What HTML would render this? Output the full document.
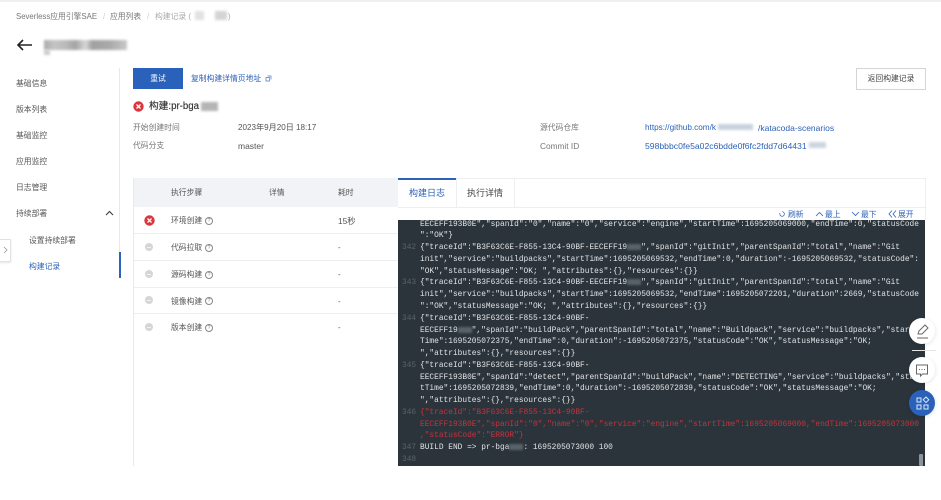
<!DOCTYPE html>
<html lang="zh"><head><meta charset="utf-8"><style>
html,body{margin:0;padding:0}
body{width:941px;height:500px;overflow:hidden;background:#fff;position:relative;font:7.8px "Liberation Sans","Noto Sans CJK SC",sans-serif;color:#555}
#w{position:absolute;left:0;top:0;width:941px;height:500px;overflow:hidden;filter:blur(.3px)}
.a{position:absolute;white-space:nowrap;line-height:12px;margin-top:.8px}
.b{position:absolute}
.blue{color:#2c62b8}
.blur{position:absolute;filter:blur(1.2px)}
.log{position:absolute;left:398px;top:220px;width:527px;height:246px;background:#2b343b;overflow:hidden}
.log pre{position:absolute;left:22px;top:-1.4px;margin:0;font:7.85px/11.77px "Liberation Mono",monospace;color:#e0e3e5;white-space:pre}
.log .n{position:absolute;left:4px;top:-1.4px;font:7.85px/11.77px "Liberation Mono",monospace;color:#59626a;white-space:pre}
.r{color:#c2333d}
.g{display:inline-block;width:14px;height:6px;background:#59626a;filter:blur(1px);vertical-align:-1px}
.fl{position:absolute;left:909px;width:26px;height:26px;border-radius:50%;background:#fff;box-shadow:0 1px 4px rgba(0,0,0,.12)}
.row{position:absolute;left:134px;width:264px;height:1px;background:#eceef0}
.d{position:absolute;left:145px;width:8px;height:8px;border-radius:50%;background:#d4d6d8}
.d:after{content:"";position:absolute;left:2px;top:3.5px;width:4px;height:1px;background:#f2f2f2}
.q{position:absolute;left:205px;width:6px;height:6px;border:.7px solid #888;border-radius:50%;font-size:5px;line-height:6px;text-align:center;color:#777}
</style></head><body><div id="w">
<div class="b" style="left:0;top:0;width:941px;height:2px;background:#f0f0f0"></div>

<div class="a" style="left:16px;top:10px;color:#777">Severless应用引擎SAE</div>
<div class="a" style="left:103px;top:10px;color:#ccc">/</div>
<div class="a" style="left:110px;top:10px;color:#777">应用列表</div>
<div class="a" style="left:147px;top:10px;color:#ccc">/</div>
<div class="a" style="left:155px;top:10px;color:#aaa">构建记录 (</div>
<div class="blur" style="left:195px;top:11px;width:9px;height:9px;background:#e2e2e2"></div>
<div class="blur" style="left:215px;top:11px;width:12px;height:9px;background:#d4d4d4"></div>
<div class="a" style="left:228px;top:10px;color:#aaa">)</div>

<svg class="b" style="left:16px;top:38px" width="17" height="14" viewBox="0 0 17 14"><path d="M16 7H2M7 2L2 7l5 5" fill="none" stroke="#222" stroke-width="1.6"/></svg>
<div class="blur" style="left:44px;top:40px;width:83px;height:10px;background:linear-gradient(90deg,#aaa,#c4c4c4 12%,#bbb 25%,#a4a4a4 38%,#d8d8d8 50%,#a0a0a0 58%,#aaa 80%,#c8c8c8)"></div>
<div class="blur" style="left:44px;top:50px;width:6px;height:5px;background:#ccc"></div>

<div class="b" style="left:119px;top:68px;width:1px;height:210px;background:#e6e8ea"></div>
<div class="b" style="left:119px;top:252px;width:1.5px;height:26px;background:#2c62b8"></div>
<div class="a" style="left:16px;top:77px">基础信息</div>
<div class="a" style="left:16px;top:103px">版本列表</div>
<div class="a" style="left:16px;top:129px">基础监控</div>
<div class="a" style="left:16px;top:155px">应用监控</div>
<div class="a" style="left:16px;top:181px">日志管理</div>
<div class="a" style="left:16px;top:207px">持续部署</div>
<svg class="b" style="left:105px;top:210px" width="9" height="6" viewBox="0 0 9 6"><path d="M1 5l3.5-3.500L8 5" fill="none" stroke="#333" stroke-width="1"/></svg>
<div class="a" style="left:29px;top:234px">设置持续部署</div>
<div class="a blue" style="left:29px;top:260px">构建记录</div>
<div class="b" style="left:-2px;top:239px;width:11px;height:21px;background:#fff;border:1px solid #e2e2e2;box-shadow:0 1px 2px rgba(0,0,0,.1)"></div>
<svg class="b" style="left:3px;top:246px" width="5" height="8" viewBox="0 0 5 8"><path d="M1 1l3 3-3 3" fill="none" stroke="#999" stroke-width=".8"/></svg>

<div class="b" style="left:133px;top:68px;width:50px;height:21px;background:#2a62bb"></div>
<div class="a" style="left:133px;top:72px;width:50px;text-align:center;color:#fff">重试</div>
<div class="a blue" style="left:191px;top:72px">复制构建详情页地址</div>
<svg class="b" style="left:265px;top:75px" width="7" height="7" viewBox="0 0 7 7"><path d="M2.500 1H6v3.500M1 2.500h3.500V6H1z" fill="none" stroke="#4a7bc8" stroke-width=".7"/></svg>
<div class="b" style="left:856px;top:68px;width:68px;height:20px;border:1px solid #d4d4d4;background:#fff"></div>
<div class="a" style="left:856px;top:72px;width:70px;text-align:center;color:#444">返回构建记录</div>

<svg class="b" style="left:133px;top:101px" width="11" height="11" viewBox="0 0 11 11"><circle cx="5.500" cy="5.500" r="5.200" fill="#d9363e"/><path d="M3.500 3.500l4 4M7.500 3.500l-4 4" stroke="#fff" stroke-width="1.300"/></svg>
<div class="a" style="left:149px;top:100px;font-size:9.700px;color:#333;-webkit-text-stroke:.15px #333">构建:pr-bga</div>
<div class="blur" style="left:201px;top:102px;width:17px;height:9px;background:#b5b5b5"></div>
<div class="a" style="left:133px;top:121px;color:#777">开始创建时间</div>
<div class="a" style="left:238px;top:121px;font-size:8.100px">2023年9月20日 18:17</div>
<div class="a" style="left:133px;top:139px;color:#777">代码分支</div>
<div class="a" style="left:238px;top:139px;font-size:8.500px">master</div>
<div class="a" style="left:540px;top:121px;color:#777">源代码仓库</div>
<div class="a" style="left:540px;top:139px;color:#777;font-size:8.300px">Commit ID</div>
<div class="a blue" style="left:645px;top:121px;font-size:8.200px">https://github.com/k</div>
<div class="blur" style="left:718px;top:124px;width:35px;height:6px;background:#c8d2de"></div>
<div class="a blue" style="left:758px;top:121px;font-size:8.500px">/katacoda-scenarios</div>
<div class="a blue" style="left:645px;top:139px;font-size:8.650px">598bbbc0fe5a02c6bdde0f6fc2fdd7d64431</div>
<div class="blur" style="left:809px;top:142px;width:17px;height:6px;background:#ccd5e0"></div>

<div class="b" style="left:133px;top:178px;width:265px;height:29px;background:#f1f3f6"></div>
<div class="b" style="left:133px;top:178px;width:1px;height:288px;background:#e8eaec"></div>
<div class="a" style="left:171px;top:186px">执行步骤</div>
<div class="a" style="left:269px;top:186px">详情</div>
<div class="a" style="left:338px;top:186px">耗时</div>
<div class="row" style="top:233px"></div><div class="row" style="top:260px"></div><div class="row" style="top:287px"></div><div class="row" style="top:313px"></div>
<svg class="b" style="left:144px;top:215px" width="11" height="11" viewBox="0 0 11 11"><circle cx="5.500" cy="5.500" r="5.200" fill="#d9363e"/><path d="M3.500 3.500l4 4M7.500 3.500l-4 4" stroke="#fff" stroke-width="1.300"/></svg>
<div class="d" style="top:243px"></div><div class="d" style="top:270px"></div><div class="d" style="top:296px"></div><div class="d" style="top:323px"></div>
<div class="a" style="left:171px;top:214px">环境创建</div><div class="q" style="top:217px">?</div>
<div class="a" style="left:171px;top:241px">代码拉取</div><div class="q" style="top:244px">?</div>
<div class="a" style="left:171px;top:268px">源码构建</div><div class="q" style="top:271px">?</div>
<div class="a" style="left:171px;top:295px">镜像构建</div><div class="q" style="top:297px">?</div>
<div class="a" style="left:171px;top:321px">版本创建</div><div class="q" style="top:324px">?</div>
<div class="a" style="left:338px;top:214px;font-size:8.300px">15秒</div>
<div class="a" style="left:338px;top:241px">-</div>
<div class="a" style="left:338px;top:268px">-</div>
<div class="a" style="left:338px;top:295px">-</div>
<div class="a" style="left:338px;top:321px">-</div>

<div class="b" style="left:398px;top:178px;width:527px;height:1px;background:#eceef0"></div>
<div class="b" style="left:925px;top:178px;width:1px;height:42px;background:#eceef0"></div>
<div class="b" style="left:398px;top:207px;width:527px;height:1px;background:#eceef0"></div>
<div class="b" style="left:398px;top:178px;width:58px;height:1.500px;background:#2c62b8"></div>
<div class="b" style="left:456px;top:178px;width:1px;height:29px;background:#eceef0"></div>
<div class="b" style="left:514px;top:178px;width:1px;height:29px;background:#eceef0"></div>
<div class="a blue" style="left:409px;top:186px;font-size:9px">构建日志</div>
<div class="a" style="left:467px;top:186px;font-size:9px;color:#444">执行详情</div>

<svg class="b" style="left:779px;top:211px" width="6" height="6" viewBox="0 0 6 6"><path d="M3 .700A2.300 2.300 0 1 1 1 2" fill="none" stroke="#2c62b8" stroke-width=".7"/></svg>
<div class="a blue" style="left:788px;top:208px">刷新</div>
<svg class="b" style="left:815px;top:211px" width="9" height="6" viewBox="0 0 9 6"><path d="M1 5l3.500-3.500L8 5" fill="none" stroke="#2c62b8" stroke-width=".8"/></svg>
<div class="a blue" style="left:825px;top:208px">最上</div>
<svg class="b" style="left:851px;top:211px" width="9" height="6" viewBox="0 0 9 6"><path d="M1 1l3.500 3.500L8 1" fill="none" stroke="#2c62b8" stroke-width=".8"/></svg>
<div class="a blue" style="left:861px;top:208px">最下</div>
<svg class="b" style="left:888px;top:210px" width="9" height="8" viewBox="0 0 9 8"><path d="M4 .500L1 4l3 3.500M8 .500L5 4l3 3.500" fill="none" stroke="#2c62b8" stroke-width=".8"/></svg>
<div class="a blue" style="left:898px;top:208px">展开</div>

<div class="log">
<div class="n">

342


343


344



345



346


347
348</div>
<pre>EECEFF193B0E","spanId":"0","name":"0","service":"engine","startTime":1695205069000,"endTime":0,"statusCode
":"OK"}
{"traceId":"B3F63C6E-F855-13C4-90BF-EECEFF19<span class="g"></span>","spanId":"gitInit","parentSpanId":"total","name":"Git
init","service":"buildpacks","startTime":1695205069532,"endTime":0,"duration":-1695205069532,"statusCode":
"OK","statusMessage":"OK; ","attributes":{},"resources":{}}
{"traceId":"B3F63C6E-F855-13C4-90BF-EECEFF19<span class="g"></span>","spanId":"gitInit","parentSpanId":"total","name":"Git
init","service":"buildpacks","startTime":1695205069532,"endTime":1695205072201,"duration":2669,"statusCode
":"OK","statusMessage":"OK; ","attributes":{},"resources":{}}
{"traceId":"B3F63C6E-F855-13C4-90BF-
EECEFF19<span class="g"></span>","spanId":"buildPack","parentSpanId":"total","name":"Buildpack","service":"buildpacks","star
Time":1695205072375,"endTime":0,"duration":-1695205072375,"statusCode":"OK","statusMessage":"OK;
","attributes":{},"resources":{}}
{"traceId":"B3F63C6E-F855-13C4-90BF-
EECEFF193B0E","spanId":"detect","parentSpanId":"buildPack","name":"DETECTING","service":"buildpacks","star
tTime":1695205072839,"endTime":0,"duration":-1695205072839,"statusCode":"OK","statusMessage":"OK;
","attributes":{},"resources":{}}
<span class="r">{"traceId":"B3F63C6E-F855-13C4-90BF-
EECEFF193B0E","spanId":"0","name":"0","service":"engine","startTime":1695205069000,"endTime":1695205073000
,"statusCode":"ERROR"}</span>
BUILD END =&gt; pr-bga<span class="g"></span>: 1695205073000 100
</pre>
<div class="b" style="left:521px;top:234px;width:4px;height:12px;background:#8d9398;border-radius:1px"></div>
</div>

<div class="b" style="left:912px;top:350px;width:24px;height:1px;background:#e4e4e4"></div>
<div class="fl" style="top:318px"><svg width="26" height="26" viewBox="0 0 26 26"><path d="M9 16l1-3 6-6 3 3-6 6zM8 20h11" fill="none" stroke="#666" stroke-width="1"/></svg></div>
<div class="fl" style="top:357px"><svg width="26" height="26" viewBox="0 0 26 26"><path d="M7.500 8h11v9h-5l-2 2v-2h-4z" fill="none" stroke="#666" stroke-width="1"/><path d="M10 12.500h1M12.500 12.500h1M15 12.500h1" stroke="#666" stroke-width="1"/></svg></div>
<div class="fl" style="top:390px;background:#2a62bb"><svg width="26" height="26" viewBox="0 0 26 26"><path d="M8 8h4v4H8zM8 15h4v4H8zM15 15h4v4h-4zM17 7l2.800 2.800L17 12.600l-2.800-2.800z" fill="none" stroke="#dfe8f7" stroke-width="1"/></svg></div>
</div></body></html>
